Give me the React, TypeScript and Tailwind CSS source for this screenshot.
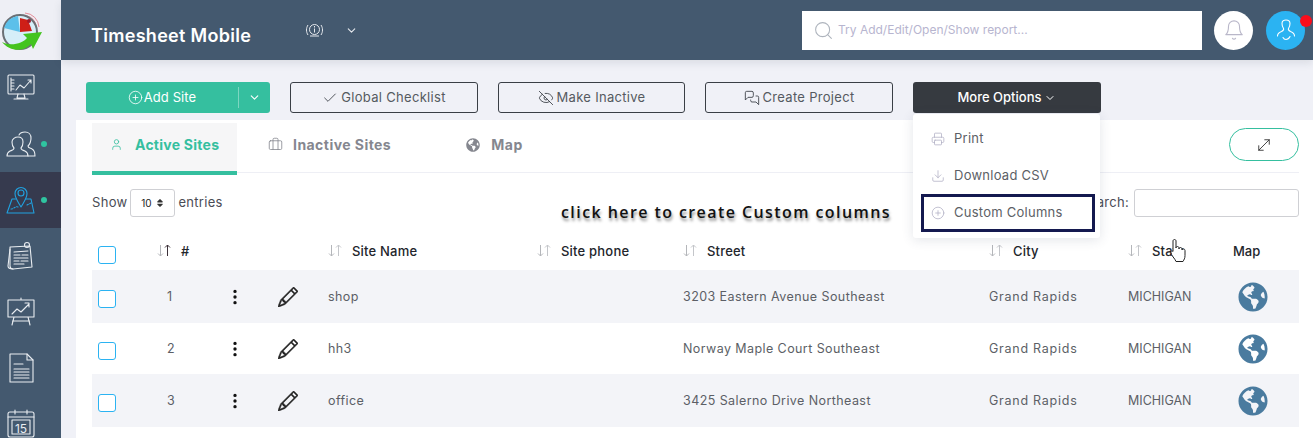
import { ReactNode } from "react";
import {
  LuBell,
  LuCheck,
  LuChevronDown,
  LuCirclePlus,
  LuDownload,
  LuEyeOff,
  LuMessagesSquare,
  LuMoveDiagonal,
  LuPrinter,
  LuSearch,
  LuUser,
  LuBriefcase,
} from "react-icons/lu";
import { FaGlobeAmericas, FaSort } from "react-icons/fa";
import { BsPencil, BsThreeDotsVertical } from "react-icons/bs";

const rows = [
  { n: 1, name: "shop", street: "3203 Eastern Avenue Southeast" },
  { n: 2, name: "hh3", street: "Norway Maple Court Southeast" },
  { n: 3, name: "office", street: "3425 Salerno Drive Northeast" },
];

const tableCols = "grid grid-cols-[65px_68px_53px_50px_209px_146px_306px_139px_105px_66px] items-center";

function Logo() {
  return (
    <svg width="42" height="40" viewBox="0 0 42 40">
      <path d="M24 2a15 15 0 0 1 14 14" fill="none" stroke="#e58a96" strokeWidth="1" />
      <path d="M26 5a11 11 0 0 1 9 10" fill="none" stroke="#e58a96" strokeWidth="1" />
      <circle cx="19" cy="21" r="17" fill="#d6eef8" stroke="#6b7075" strokeWidth="2" />
      <path d="M19 21 L3 17 A16 16 0 0 1 17 5 Z" fill="#5cc0ea" />
      <path d="M19 21 L19 7 L27 9 L31 20 Z" fill="#cf1f17" />
      <circle cx="28" cy="10" r="2" fill="#a01a2c" />
      <path d="M1 31 C10 36 22 32 26 27 L22 23 L41 21 L32 38 L30 33 C22 42 8 40 1 31Z" fill="#43c41f" />
    </svg>
  );
}

function NavIcon({ blue, children }: { blue?: boolean; children: ReactNode }) {
  return (
    <svg
      width="30"
      height="30"
      viewBox="0 0 30 30"
      fill="none"
      stroke={blue ? "#21a2e0" : "#e9edf1"}
      strokeWidth="1.1"
      strokeLinejoin="round"
      strokeLinecap="round"
    >
      {children}
    </svg>
  );
}

function NavItem({ active, dot, children }: { active?: boolean; dot?: boolean; children: ReactNode }) {
  return (
    <div className={`h-14 shrink-0 flex items-center pl-[6px] ${active ? "bg-[#363a4e]" : ""}`}>
      {children}
      {dot && <span className="ml-[5px] w-[6px] h-[6px] rounded-full bg-[#2fc4a0]" />}
    </div>
  );
}

function Sidebar() {
  return (
    <div className="w-[61px] shrink-0 bg-[#44596f] flex flex-col">
      <div className="h-[60px] shrink-0 bg-[#eeeff5] flex items-center pl-[1px] pt-[2px]">
        <Logo />
      </div>
      <NavItem>
        <NavIcon>
          <rect x="2" y="2" width="26" height="19" rx="1" />
          <path d="M5 5v13M5 7h3M5 10h3M5 13h3M5 16h3M10 17l4-5 4 3 7-8M22 7h3v3M12 21l-1 4h8l-1-4M8 26h14" />
        </NavIcon>
      </NavItem>
      <NavItem dot>
        <NavIcon>
          <path d="M12 8c3 0 5 2 5 5 0 3-1 5-2 6 0 2 1 2 4 3 2 1 3 2 3 5H1c0-3 1-4 3-5 3-1 4-1 4-3-1-1-2-3-2-6 0-3 3-5 6-5Z" />
          <path d="M13 6c1-2 3-3 6-3 4 0 6 3 6 6s-1 6-3 8c0 2 2 2 4 3 2 1 3 3 3 7h-7" />
        </NavIcon>
      </NavItem>
      <NavItem active dot>
        <NavIcon blue>
          <path d="M15 22C12 17 9 13 9 8.500a6 6 0 0 1 12 0C21 13 18 17 15 22Z" />
          <circle cx="15" cy="8" r="3" />
          <path d="M9.500 14H6L1 28h27l-3-14h-5" />
          <path d="M5 24c3 0 4-3 7-2M21 20l4-2" strokeDasharray="1.500 1.500" />
        </NavIcon>
      </NavItem>
      <NavItem>
        <NavIcon>
          <path d="M4 6l20-1 2 21-19 2c-2 0-3-1-3-3Z" />
          <path d="M4 8 2 25c0 2 2 3 5 3M8 11l14-1M8 14h6M16 14h6M8 17h14M8 20h5M15 20h7M8 23h10" />
          <circle cx="21" cy="4" r="2.500" />
        </NavIcon>
      </NavItem>
      <NavItem>
        <NavIcon>
          <path d="M15 1v2M2 3h26v17H2ZM6 17l5-5 4 3 8-8M19 6h4v4M8 20 6 28M22 20l2 8M6.500 24h17" />
        </NavIcon>
      </NavItem>
      <NavItem>
        <NavIcon>
          <path d="M4 1h17l6 6v22H4Z" />
          <path d="M21 1v6h6M8 11h9M8 16h15M8 19h15M8 22h15M8 25h15" />
        </NavIcon>
      </NavItem>
      <NavItem>
        <NavIcon>
          <rect x="2" y="3" width="26" height="25" rx="2" />
          <path d="M2 8h26M9 1v4M21 1v4M6 11h18v14H6Z" />
          <text x="15" y="23.500" textAnchor="middle" fontSize="12" fill="#e9edf1" stroke="none" fontFamily="Inter, sans-serif">
            15
          </text>
        </NavIcon>
      </NavItem>
    </div>
  );
}

function Header() {
  return (
    <div className="h-[60px] shrink-0 bg-[#44596f] flex items-center pl-[30px] shadow-[0_3px_8px_rgba(60,70,90,0.12)] relative">
      <span className="shrink-0 mt-[10px] text-[18px] font-semibold text-white w-[214px] tracking-[0.3px]">Timesheet Mobile</span>
      <svg width="19" height="16" viewBox="0 0 19 16" fill="none" stroke="#e6e9ee" strokeWidth="1" className="shrink-0">
        <circle cx="9.500" cy="7.500" r="5" />
        <path d="M3 3C1 6 1 10 3 13M16 3c2 3 2 7 0 10M9.500 6.500v4M9.500 4v1.500M5 14h9" />
      </svg>
      <LuChevronDown className="shrink-0 ml-[21px] text-[#e6e9ee] text-[13px]" />
      <div className="shrink-0 ml-[444px] w-[400px] h-[39px] bg-white flex items-center pl-[11px] text-[12px] text-[#b7b5cf]">
        <LuSearch className="text-[21px] text-[#aeb4bd] mr-[4px] [stroke-width:1.200]" />
        <span className="mb-px">Try Add/Edit/Open/Show report...</span>
      </div>
      <div className="shrink-0 ml-[12px] w-[39px] h-[39px] rounded-full bg-white flex items-center justify-center">
        <LuBell className="text-[22px] text-[#b9b7c9] [stroke-width:1.200]" />
      </div>
      <div className="shrink-0 ml-[13px] w-[39px] h-[39px] rounded-full bg-[#2bb3f2] flex items-center justify-center relative">
        <svg width="20" height="22" viewBox="0 0 20 22" fill="none" stroke="#fff" strokeWidth="1.100" strokeLinecap="round">
          <path d="M6 4.500C6 2 8 1 10 1s4 1 4 3.500c0 2-.8 4-1.500 5-.5 1 0 2 2 3 2.500 1 4 2 4 4.500M6 4.500c0 2 .8 4 1.500 5 .5 1 0 2-2 3-2.500 1-4 2-4 4.500M7 18.500c1 2 2 2 3 2s3-1 4-3" />
        </svg>
        <span className="absolute top-[4px] -right-[7px] w-[12px] h-[12px] rounded-full bg-[#fb0d1b]" />
      </div>
    </div>
  );
}

function ToolButton({ icon, label, width }: { icon: ReactNode; label: string; width: string }) {
  return (
    <button className={`${width} h-[31px] rounded-[3px] border border-[#3a3f46] flex items-center justify-center gap-[3px] text-[13px] tracking-[0.3px] text-[#555a60]`}>
      {icon}
      {label}
    </button>
  );
}

function Toolbar() {
  return (
    <div className="h-[60px] shrink-0 pt-[22px] pl-[25px] flex items-start gap-5">
      <div className="w-[184px] h-[31px] rounded-[3px] bg-[#35bf9f] flex items-center text-white text-[13px] tracking-[0.1px]">
        <div className="w-[152px] flex items-center justify-center gap-[1px]">
          <LuCirclePlus className="text-[15px] [stroke-width:1.300]" />
          Add Site
        </div>
        <div className="w-px h-[21px] bg-[#7dd6c1]" />
        <LuChevronDown className="ml-[9px] text-[13px]" />
      </div>
      <ToolButton width="w-[188px]" icon={<LuCheck className="text-[16px] [stroke-width:1.300] text-[#3a3f46]" />} label="Global Checklist" />
      <ToolButton width="w-[187px]" icon={<LuEyeOff className="text-[16px] [stroke-width:1.300] text-[#3a3f46]" />} label="Make Inactive" />
      <ToolButton width="w-[188px]" icon={<LuMessagesSquare className="text-[16px] [stroke-width:1.300] text-[#3a3f46]" />} label="Create Project" />
      <div className="relative z-10">
        <button className="w-[188px] h-[31px] rounded-[3px] bg-[#363a40] text-white text-[13px] font-medium flex items-center justify-center gap-[3px]">
          More Options
          <LuChevronDown className="text-[12px]" />
        </button>
        <div className="absolute top-[32px] left-0 w-[187px] h-[124px] bg-white rounded-[3px] shadow-[0_2px_12px_rgba(60,70,100,0.14)] pt-[6px] text-[13px] tracking-[0.25px] text-[#5c5f66]">
          <div className="h-[37px] flex items-center pl-[18px] gap-[9px]">
            <LuPrinter className="text-[14px] text-[#b0aec4] [stroke-width:1.300]" />
            Print
          </div>
          <div className="h-[37px] flex items-center pl-[18px] gap-[9px]">
            <LuDownload className="text-[14px] text-[#b0aec4] [stroke-width:1.300]" />
            Download CSV
          </div>
          <div className="h-[38px] ml-[8px] mr-[5px] border-[3px] border-[#14194f] flex items-center pl-[7px] gap-[9px]">
            <LuCirclePlus className="text-[14px] text-[#b0aec4] [stroke-width:1.300]" />
            Custom Columns
          </div>
        </div>
      </div>
    </div>
  );
}

function SortArrows({ dark }: { dark?: boolean }) {
  return (
    <span className="w-[24px] shrink-0 mb-[3px]">
      <svg width="14" height="13" viewBox="0 0 14 13" fill="none" strokeWidth="1">
        <path d="M3.500 1v11M1 9.500l2.500 2.500L6 9.500" stroke="#b4b6ba" />
        <path d="M10.500 12V1M8 3.500L10.500 1 13 3.500" stroke={dark ? "#3b3038" : "#c4c6ca"} />
      </svg>
    </span>
  );
}

function HeadCell({ label, dark }: { label: string; dark?: boolean }) {
  return (
    <div className="flex items-center text-[13px] tracking-[0.2px] font-medium text-[#22252b]">
      <SortArrows dark={dark} />
      {label}
    </div>
  );
}

function Checkbox() {
  return <span className="ml-[6px] mt-[5px] block w-[18px] h-[18px] rounded-[3px] border border-[#2bb3f2] bg-white" />;
}

function SitesTable() {
  return (
    <div className="mt-[17px]">
      <div className={`${tableCols} h-[36px]`}>
        <Checkbox />
        <HeadCell label="#" dark />
        <div />
        <div />
        <HeadCell label="Site Name" />
        <HeadCell label="Site phone" />
        <HeadCell label="Street" />
        <HeadCell label="City" />
        <HeadCell label="State" />
        <div className="text-[13px] font-medium text-[#22252b]">Map</div>
      </div>
      {rows.map((r) => (
        <div
          key={r.n}
          className={`${tableCols} text-[12.500px] text-[#5c5f66] ${r.n === 2 ? "h-[51px] bg-white" : "h-[53px] bg-[#f3f4f8]"}`}
        >
          <Checkbox />
          <div className="pl-[10px] pt-[2px]">{r.n}</div>
          <BsThreeDotsVertical className="text-[18px] text-[#111] ml-[1px]" />
          <BsPencil className="text-[20px] text-[#222] stroke-[0.4px]" />
          <div className="pt-[2px] tracking-[0.4px]">{r.name}</div>
          <div />
          <div className="pt-[2px] tracking-[0.42px]">{r.street}</div>
          <div className="pt-[2px] tracking-[0.75px]">Grand Rapids</div>
          <div className="pt-[2px]">MICHIGAN</div>
          <FaGlobeAmericas className="text-[30px] text-[#4a7b9f] ml-[5px]" />
        </div>
      ))}
    </div>
  );
}

function Panel() {
  return (
    <div className="flex-1 bg-white ml-[15px] px-[16px] pt-[3px] pr-[14px] relative">
      <div className="flex items-start h-[50px] border-b border-[#eeeff5] relative">
        <div className="shrink-0 w-[145px] h-[52px] bg-[#f6f6f7] border-b-[4px] border-[#35bf9f] flex items-center pl-[18px] pb-[6px] gap-[12px] text-[14px] tracking-[0.25px] font-bold text-[#35bf9f]">
          <LuUser className="text-[13px] [stroke-width:1.500]" />
          Active Sites
        </div>
        <div className="h-[43px] flex items-center ml-[31px] gap-[10px] text-[14px] tracking-[0.45px] font-bold text-[#85878f]">
          <LuBriefcase className="text-[15px] [stroke-width:1.300]" />
          Inactive Sites
        </div>
        <div className="h-[43px] flex items-center ml-[75px] gap-[11px] text-[14px] tracking-[0.6px] font-bold text-[#85878f]">
          <FaGlobeAmericas className="text-[14px]" />
          Map
        </div>
        <button className="ml-auto mt-[5px] w-[70px] h-[33px] rounded-full border border-[#35bf9f] flex items-center justify-center">
          <LuMoveDiagonal className="text-[18px] text-[#333] [stroke-width:1.200]" />
        </button>
      </div>
      <div className="flex items-center mt-[16px] h-[28px] text-[13px] tracking-[0.3px] text-[#4a4c55]">
        <span>Show</span>
        <div className="ml-[3px] w-[45px] h-[28px] rounded-[3px] border border-[#cfd0d4] flex items-center justify-center gap-[3px] text-[10px] tracking-normal text-[#222]">
          10
          <FaSort className="text-[10px] text-[#333]" />
        </div>
        <span className="ml-[3px]">entries</span>
        <span className="ml-auto">Search:</span>
        <div className="ml-[5px] w-[165px] h-[28px] rounded-[3px] border border-[#cfd0d4] bg-white" />
      </div>
      <SitesTable />
    </div>
  );
}

export default function App() {
  return (
    <div className="w-[1313px] h-[438px] overflow-hidden flex bg-[#eeeff6] [font-family:Inter,sans-serif] relative">
      <Sidebar />
      <div className="flex-1 flex flex-col bg-[#f0f1f7] min-w-0">
        <Header />
        <Toolbar />
        <Panel />
      </div>
      <span className="absolute left-[561px] top-[201px] text-[16px] leading-[22px] font-semibold tracking-[1.42px] text-[#111] [font-family:'Open_Sans',sans-serif] [text-shadow:1px_3px_3px_rgba(0,0,0,0.45)]">
        click here to create Custom columns
      </span>
      <svg className="absolute left-[1170px] top-[239px]" width="16" height="25" viewBox="0 0 16 25" fill="#fff" stroke="#222" strokeWidth="1" strokeLinejoin="round">
        <path d="M3 2c0-2 3-2 3 0v7c0-2 3-2 3 0v1c0-2 3-2 3 0v1c0-1.500 3-1.500 3 .5v5c0 3-1 4-2 6H6c-1-3-5-6-5-9 0-2 1-2 2-1Z" />
      </svg>
    </div>
  );
}
